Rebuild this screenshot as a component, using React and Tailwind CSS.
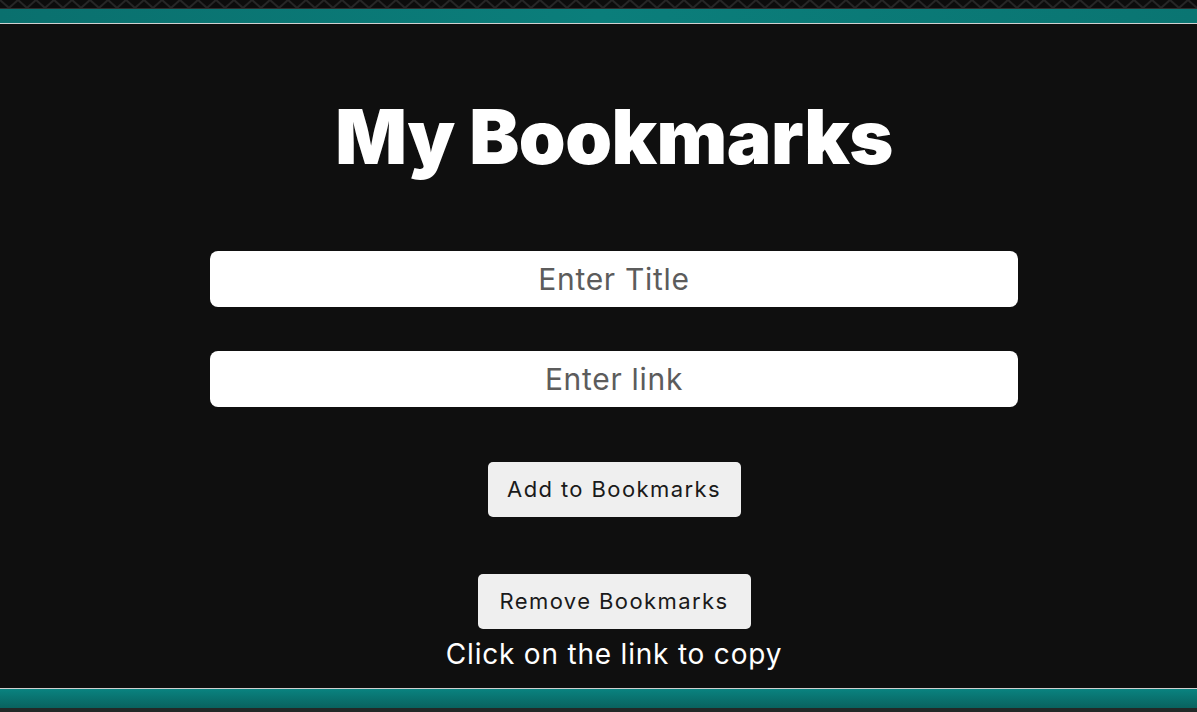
import React from 'react';

function Zigzag() {
  return (
    <svg className="block h-[9px] w-full" xmlns="http://www.w3.org/2000/svg">
      <defs>
        <pattern id="zz" width="18" height="9" patternUnits="userSpaceOnUse">
          <path d="M0 0 L9 8 L18 0" fill="none" stroke="#262626" strokeWidth="2" />
        </pattern>
      </defs>
      <rect width="100%" height="9" fill="#0c0c0c" />
      <rect width="100%" height="8" fill="url(#zz)" />
      <rect y="8" width="100%" height="1" fill="#2e2e2e" />
    </svg>
  );
}

export default function App() {
  const font = { fontFamily: 'Inter, "Noto Sans", sans-serif' };

  return (
    <div className="flex h-[712px] w-full flex-col overflow-hidden bg-[#0f0f0f]" style={font}>
      <Zigzag />
      <div className="h-[14px] bg-gradient-to-r from-[#0a706e] via-[#0b7e7b] to-[#0a7572]" />
      <div className="h-px bg-[#d0d0d0]" />

      <main className="flex flex-1 flex-col items-center pl-[31px] pt-[75px]">
        <h1 className="text-[75px] font-black leading-none tracking-[-0.5px] text-white">My Bookmarks</h1>

        <input
          placeholder="Enter Title"
          className="mt-[77px] h-[56px] w-[808px] rounded-lg bg-white text-center text-[30px] tracking-[0.7px] text-[#222] placeholder:text-[#5c5c5c] outline-none"
        />
        <input
          placeholder="Enter link"
          className="mt-[44px] h-[56px] w-[808px] rounded-lg bg-white text-center text-[30px] tracking-[0.7px] text-[#222] placeholder:text-[#5c5c5c] outline-none"
        />

        <button className="mt-[55px] h-[55px] w-[253px] rounded-[5px] bg-[#efefef] text-[22px] tracking-[1.4px] text-[#1a1a1a]">
          Add to Bookmarks
        </button>
        <button className="mt-[57px] h-[55px] w-[273px] rounded-[5px] bg-[#efefef] text-[22px] tracking-[1.4px] text-[#1a1a1a]">
          Remove Bookmarks
        </button>
        <p className="mt-[8px] text-[28px] leading-tight tracking-[0.8px] text-white">Click on the link to copy</p>
      </main>

      <div className="h-px bg-[#d0d0d0]" />
      <div className="h-[19px] bg-gradient-to-b from-[#0a8380] to-[#09625f]" />
      <div className="h-[4px] bg-[#222827]" />
    </div>
  );
}
